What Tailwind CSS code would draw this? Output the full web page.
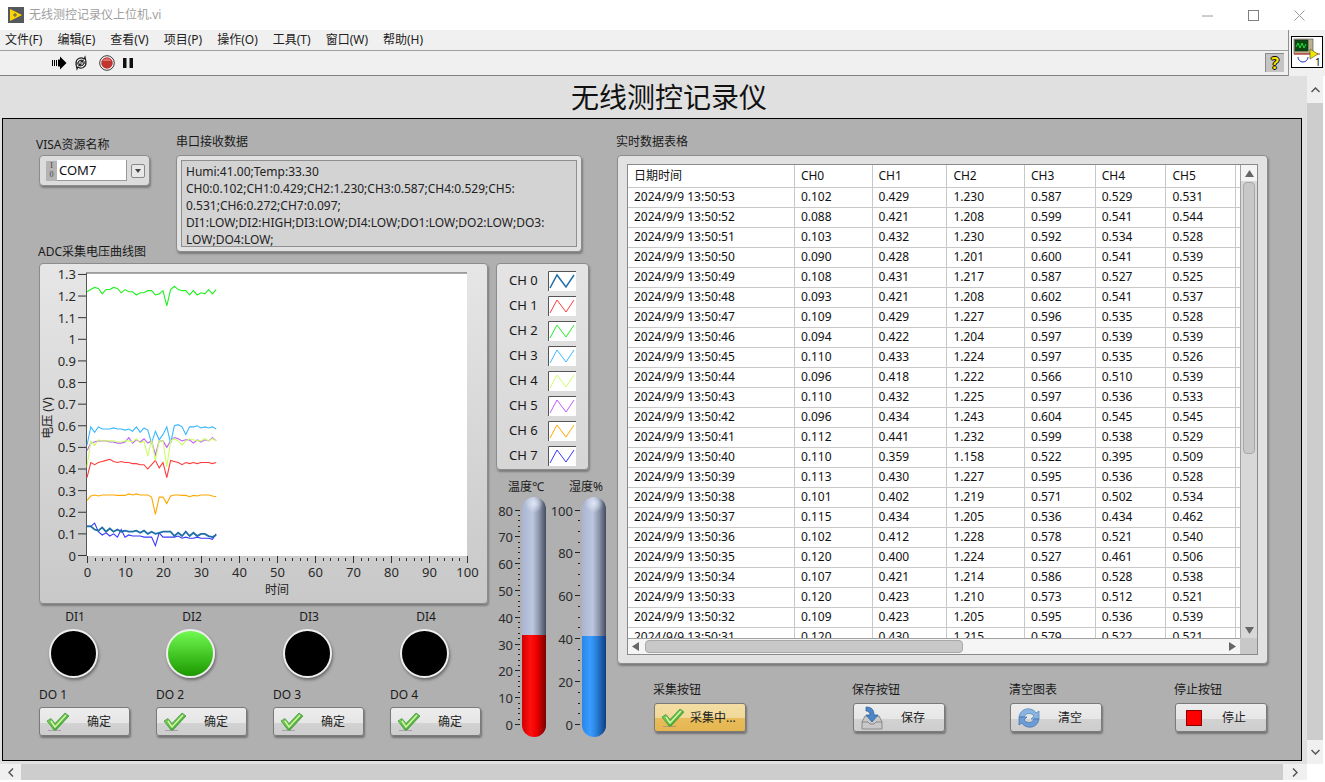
<!DOCTYPE html>
<html lang="zh-CN">
<head>
    <meta charset="UTF-8">
    <title>无线测控记录仪上位机.vi</title>
    <script src="https://cdn.jsdelivr.net/npm/@tailwindcss/browser@4"></script>
</head>
<body class="w-[1325px] h-[782px] overflow-hidden bg-white text-[12px] text-[#1a1a1a] font-['Noto_Sans','Noto_Sans_CJK_SC',sans-serif]">

    <!-- title bar -->
    <div class="h-[30px] flex items-center bg-white">
        <svg class="ml-[8px]" width="16" height="16" viewBox="0 0 16 16"><rect width="16" height="16" fill="#55595e"/><path d="M2 2 L14 8 L2 14 Z" fill="#ffd400"/><path d="M5 8h4M7 6v4" stroke="#55595e" stroke-width="1"/></svg>
        <span class="ml-[5px] text-[#a0a0a0]">无线测控记录仪上位机.vi</span>
        <div class="ml-auto flex items-center pr-[20px] gap-[35px]">
            <svg width="11" height="11" viewBox="0 0 11 11"><path d="M0 6h11" stroke="#9a9a9a"/></svg>
            <svg width="11" height="11" viewBox="0 0 11 11"><rect x=".5" y=".5" width="10" height="10" fill="none" stroke="#808080"/></svg>
            <svg width="11" height="11" viewBox="0 0 11 11"><path d="M.5 .5l10 10M10.5 .5l-10 10" stroke="#9a9a9a"/></svg>
        </div>
    </div>

    <!-- menu + toolbar -->
    <div class="flex h-[46px] bg-[#f0f0f0]">
        <div class="w-[1288px]">
            <div class="h-[21px] border-b border-[#a0a0a0] flex items-center pl-[5px] gap-[15px] text-[#222]">
                <span>文件(F)</span><span>编辑(E)</span><span>查看(V)</span><span>项目(P)</span><span>操作(O)</span><span>工具(T)</span><span>窗口(W)</span><span>帮助(H)</span>
            </div>
            <div class="h-[25px] border-b border-[#808080] flex items-center">
                <svg class="ml-[52px]" width="15" height="14" viewBox="0 0 15 14"><path d="M0 4h1v6H0zM2 4h1v6H2zM4 4h1v6H4zM6 3.5h2V0.5L14.5 7 8 13.500V10.500H6z" fill="#000"/></svg>
                <svg class="ml-[6px]" width="16" height="16" viewBox="0 0 16 16" fill="none" stroke="#222" stroke-width="1.200"><path d="M3 8a5 5 0 0 1 8-4l1-2 1 5h-5l2-1.500a3.500 3.500 0 0 0-5 2.500z" fill="#fff"/><path d="M13 8a5 5 0 0 1-8 4l-1 2-1-5h5l-2 1.500a3.500 3.500 0 0 0 5-2.500z" fill="#fff"/></svg>
                <svg class="ml-[10px]" width="16" height="16" viewBox="0 0 16 16"><circle cx="8" cy="8" r="7.300" fill="#fff" stroke="#333"/><circle cx="8" cy="8" r="5.800" fill="#c0352f"/><path d="M3.500 6a5 5 0 0 1 9 0z" fill="#d9726d"/></svg>
                <svg class="ml-[8px]" width="10" height="12" viewBox="0 0 10 12"><path d="M0 1h3.500v10H0zM6.500 1H10v10H6.500z" fill="#111"/></svg>
                <div class="ml-auto mr-[4px] mb-[1px] w-[19px] h-[19px] bg-[#c4c4c4] border-t border-l border-[#8a8a8a] flex items-center justify-center">
                    <span class="text-[16px] font-bold leading-none text-[#ffe600] [text-shadow:1px_0_0_#000,-1px_0_0_#000,0_1px_0_#000,0_-1px_0_#000]">?</span>
                </div>
            </div>
        </div>
        <div class="flex-1 border-l border-[#909090] pl-[2px] pt-[6px]">
            <svg width="32" height="32" viewBox="0 0 32 32">
                <rect x=".5" y=".5" width="31" height="31" fill="#fff" stroke="#000"/>
                <rect x="3" y="3" width="19" height="15" fill="#b9b48f" stroke="#444" stroke-width=".6"/>
                <rect x="4" y="4" width="13" height="11" fill="#0a4a12" stroke="#222" stroke-width=".6"/>
                <path d="M5 11l2-4 2 5 2-5 2 5 2-4" fill="none" stroke="#28e040"/>
                <path d="M3 18h26" stroke="#d02020"/>
                <path d="M7 21a4 4 0 0 0 10 0" fill="none" stroke="#2030d0"/>
                <path d="M19 13l8 5-8 5z" fill="#f0e800" stroke="#444" stroke-width=".6"/>
                <text x="24" y="30" font-size="10" fill="#000">1</text>
            </svg>
        </div>
    </div>

    <!-- front panel -->
    <div class="flex h-[688px]">
        <div class="w-[1307px] bg-[#e0e0e0]">
            <div class="h-[42px] pl-[31px] flex items-center justify-center text-[28px] text-[#111]">无线测控记录仪</div>
            <div class="ml-[2px] w-[1300px] h-[643px] border border-black bg-[#b0b0b0] flex">

                <!-- left column -->
                <div class="w-[580px] ml-[33px] shrink-0">
                    <div class="flex h-[133px]">
                        <div class="w-[140px] pt-[18px]">
                            <div class="h-[16px] leading-[16px]">VISA资源名称</div>
                            <div class="mt-[2px] ml-[3px] w-[111px] h-[31px] rounded-[4px] border border-[#8c8c8c] bg-[#dcdcdc] shadow-[1px_2px_2px_rgba(0,0,0,0.3)] flex items-center pl-[6px]">
                                <div class="w-[11px] h-[20px] bg-[#b4b4b4] text-[8px] leading-[9px] text-center text-[#444] font-['Liberation_Serif',serif]">I<br>0</div>
                                <div class="w-[70px] h-[21px] bg-white border-r border-b border-[#999] pl-[2px] leading-[20px] text-[13px] text-[#111]">COM7</div>
                                <div class="ml-[4px] w-[14px] h-[14px] rounded-[2px] border border-[#888] bg-[#e8e8e8] flex items-center justify-center">
                                    <svg width="6" height="4" viewBox="0 0 6 4"><path d="M0 0h6L3 4z" fill="#444"/></svg>
                                </div>
                            </div>
                        </div>
                        <div class="pt-[15px]">
                            <div class="h-[16px] leading-[16px] mb-[5px]">串口接收数据</div>
                            <div class="w-[406px] h-[97px] rounded-[4px] border border-[#8c8c8c] bg-[#e2e2e2] shadow-[1px_2px_2px_rgba(0,0,0,0.3)] p-[4px]">
                                <div class="h-[87px] bg-[#d3d3d3] border border-[#8f8f8f] pl-[4px] pt-[2px] leading-[17px] text-[#222] whitespace-nowrap">
                                    Humi:41.00;Temp:33.30<br>
                                    CH0:0.102;CH1:0.429;CH2:1.230;CH3:0.587;CH4:0.529;CH5:<br>
                                    0.531;CH6:0.272;CH7:0.097;<br>
                                    DI1:LOW;DI2:HIGH;DI3:LOW;DI4:LOW;DO1:LOW;DO2:LOW;DO3:<br>
                                    LOW;DO4:LOW;
                                </div>
                            </div>
                        </div>
                    </div>

                    <div class="flex ml-[2px]">
                        <div class="w-[458px] shrink-0">
                            <div class="-mt-[8px] h-[16px] leading-[16px] mb-[3px]">ADC采集电压曲线图</div>
                            <div class="ml-px w-[449px] h-[341px] rounded-[4px] border border-[#8c8c8c] bg-[linear-gradient(#e6e6e6,#c8c8c8)] shadow-[1px_2px_2px_rgba(0,0,0,0.3)]">
                                <svg id="chart" class="-m-px" width="449" height="341" font-size="13"></svg>
                            </div>

                            <div class="mt-[6px] flex gap-[46px]">
                                <div class="w-[71px] flex flex-col items-center"><div class="h-[14px] leading-[14px] pl-[3px]">DI1</div><div class="mt-[5px] w-[49px] h-[49px] rounded-full bg-black border-2 border-[#eee] shadow-[1px_2px_3px_rgba(0,0,0,0.4)]"></div></div>
                                <div class="w-[71px] flex flex-col items-center"><div class="h-[14px] leading-[14px] pl-[3px]">DI2</div><div class="mt-[5px] w-[49px] h-[49px] rounded-full bg-[linear-gradient(#70fa50,#1c9800)] border-2 border-[#eee] shadow-[1px_2px_3px_rgba(0,0,0,0.4)]"></div></div>
                                <div class="w-[71px] flex flex-col items-center"><div class="h-[14px] leading-[14px] pl-[3px]">DI3</div><div class="mt-[5px] w-[49px] h-[49px] rounded-full bg-black border-2 border-[#eee] shadow-[1px_2px_3px_rgba(0,0,0,0.4)]"></div></div>
                                <div class="w-[71px] flex flex-col items-center"><div class="h-[14px] leading-[14px] pl-[3px]">DI4</div><div class="mt-[5px] w-[49px] h-[49px] rounded-full bg-black border-2 border-[#eee] shadow-[1px_2px_3px_rgba(0,0,0,0.4)]"></div></div>
                            </div>

                            <div class="mt-[10px] ml-px flex gap-[26px]">
                                <div class="w-[91px]"><div class="h-[14px] leading-[14px]">DO 1</div><div class="do-btn mt-[5px] w-[91px] h-[29px] rounded-[3px] border border-[#7a7a7a] bg-[linear-gradient(#ededed_0%,#e6e6e6_55%,#d2d2d2_56%,#cdcdcd_100%)] shadow-[1px_2px_2px_rgba(0,0,0,0.35)] flex items-center pl-[6px]"></div></div>
                                <div class="w-[91px]"><div class="h-[14px] leading-[14px]">DO 2</div><div class="do-btn mt-[5px] w-[91px] h-[29px] rounded-[3px] border border-[#7a7a7a] bg-[linear-gradient(#ededed_0%,#e6e6e6_55%,#d2d2d2_56%,#cdcdcd_100%)] shadow-[1px_2px_2px_rgba(0,0,0,0.35)] flex items-center pl-[6px]"></div></div>
                                <div class="w-[91px]"><div class="h-[14px] leading-[14px]">DO 3</div><div class="do-btn mt-[5px] w-[91px] h-[29px] rounded-[3px] border border-[#7a7a7a] bg-[linear-gradient(#ededed_0%,#e6e6e6_55%,#d2d2d2_56%,#cdcdcd_100%)] shadow-[1px_2px_2px_rgba(0,0,0,0.35)] flex items-center pl-[6px]"></div></div>
                                <div class="w-[91px]"><div class="h-[14px] leading-[14px]">DO 4</div><div class="do-btn mt-[5px] w-[91px] h-[29px] rounded-[3px] border border-[#7a7a7a] bg-[linear-gradient(#ededed_0%,#e6e6e6_55%,#d2d2d2_56%,#cdcdcd_100%)] shadow-[1px_2px_2px_rgba(0,0,0,0.35)] flex items-center pl-[6px]"></div></div>
                            </div>
                        </div>

                        <div class="w-[120px] shrink-0">
                            <div id="legend" class="mt-[11px] w-[93px] h-[207px] rounded-[4px] border border-[#8c8c8c] bg-[linear-gradient(#e4e4e4,#d6d6d6)] shadow-[1px_2px_2px_rgba(0,0,0,0.3)] pt-[4px]"></div>
                            <div class="mt-[10px] flex h-[14px] leading-[14px] text-center">
                                <div class="w-[60px]">温度℃</div>
                                <div class="w-[60px]">湿度%</div>
                            </div>
                            <div class="mt-[3px] flex h-[240px]">
                                <svg id="scaleT" width="26" height="240" font-size="13"></svg>
                                <div class="relative w-[24px] h-[240px] rounded-t-[12px] rounded-b-[12px] overflow-hidden bg-[linear-gradient(90deg,#aab5d2_0%,#bcc6df_45%,#8e97ad_70%,#454c60_100%)]">
                                    <div class="absolute left-0 top-0 w-full h-[16px] bg-[radial-gradient(circle_at_50%_40%,#dfe6f5,transparent_60%)]"></div>
                                    <div class="absolute left-0 bottom-0 w-full h-[102px] bg-[linear-gradient(90deg,#d00000_0%,#ff1010_35%,#f00000_60%,#7a0000_100%)]"></div>
                                </div>
                                <svg id="scaleH" width="36" height="240" font-size="13"></svg>
                                <div class="relative w-[24px] h-[240px] rounded-t-[12px] rounded-b-[12px] overflow-hidden bg-[linear-gradient(90deg,#aab5d2_0%,#bcc6df_45%,#8e97ad_70%,#454c60_100%)]">
                                    <div class="absolute left-0 top-0 w-full h-[16px] bg-[radial-gradient(circle_at_50%_40%,#dfe6f5,transparent_60%)]"></div>
                                    <div class="absolute left-0 bottom-0 w-full h-[101px] bg-[linear-gradient(90deg,#2a86e8_0%,#3a9cff_35%,#2a80dc_60%,#0c3f80_100%)]"></div>
                                </div>
                            </div>
                        </div>
                    </div>
                </div>

                <!-- right column -->
                <div class="pt-[15px]">
                    <div class="h-[16px] leading-[16px] mb-[5px]">实时数据表格</div>
                    <div class="ml-px w-[651px] h-[509px] rounded-[4px] border border-[#8c8c8c] bg-[#e2e2e2] shadow-[1px_2px_2px_rgba(0,0,0,0.3)] pl-[9px] pt-[8px]">
                        <div class="w-[631px] h-[491px] border border-[#8a8a8a] bg-white">
                            <div class="flex h-[473px]">
                                <div class="w-[612px] h-[473px] overflow-hidden">
                                    <table class="table-fixed border-collapse w-[892px] text-[#111]">
                                        <colgroup>
                                            <col class="w-[120px]"><col class="w-[56px]"><col class="w-[54px]"><col class="w-[56px]"><col class="w-[51px]"><col class="w-[51px]"><col class="w-[50px]"><col class="w-[52px]"><col class="w-[51px]"><col class="w-[51px]"><col class="w-[51px]">
                                        </colgroup>
                                        <thead id="thead"></thead>
                                        <tbody id="tbody"></tbody>
                                    </table>
                                </div>
                                <div class="w-[17px] h-[473px] bg-[#d8d8d8] border-l border-[#a0a0a0] flex flex-col items-center">
                                    <div class="w-full h-[16px] bg-[#f4f4f4] flex items-center justify-center"><svg width="9" height="7" viewBox="0 0 9 7"><path d="M4.500 0L9 7H0z" fill="#666"/></svg></div>
                                    <div class="mt-[1px] w-[12px] h-[272px] rounded-[4px] border border-[#a8a8a8] bg-[#c8c8c8]"></div>
                                    <div class="mt-auto mb-[4px]"><svg width="9" height="7" viewBox="0 0 9 7"><path d="M0 0h9L4.500 7z" fill="#666"/></svg></div>
                                </div>
                            </div>
                            <div class="flex h-[16px]">
                                <div class="w-[612px] bg-[#f5f5f5] border-t border-[#a0a0a0] flex items-center pl-[4px]">
                                    <svg width="7" height="9" viewBox="0 0 7 9"><path d="M0 4.500L7 0V9z" fill="#666"/></svg>
                                    <div class="ml-[6px] w-[318px] h-[13px] rounded-[4px] border border-[#a8a8a8] bg-[#c8c8c8]"></div>
                                    <svg class="ml-auto mr-[4px]" width="7" height="9" viewBox="0 0 7 9"><path d="M7 4.500L0 0V9z" fill="#666"/></svg>
                                </div>
                                <div class="w-[17px] bg-[#c8c8c8]"></div>
                            </div>
                        </div>
                    </div>

                    <div class="mt-[19px] ml-[37px] flex">
                        <div class="w-[199px]">
                            <div class="h-[14px] leading-[14px]">采集按钮</div>
                            <div class="mt-[6px] ml-px w-[92px] h-[29px] rounded-[3px] border border-[#7a7a7a] bg-[linear-gradient(#f3dda4_0%,#f0d998_50%,#e8bd5c_52%,#e6b650_100%)] shadow-[1px_2px_2px_rgba(0,0,0,0.35)] flex items-center pl-[6px]">
                                <svg width="24" height="20" viewBox="0 0 24 20"><use href="#check"/></svg>
                                <span class="ml-[5px] text-[#222]">采集中...</span>
                            </div>
                        </div>
                        <div class="w-[157px]">
                            <div class="h-[14px] leading-[14px]">保存按钮</div>
                            <div class="mt-[6px] ml-px w-[92px] h-[29px] rounded-[3px] border border-[#7a7a7a] bg-[linear-gradient(#ededed_0%,#e6e6e6_55%,#d2d2d2_56%,#cdcdcd_100%)] shadow-[1px_2px_2px_rgba(0,0,0,0.35)] flex items-center pl-[6px]">
                                <svg width="24" height="24" viewBox="0 0 24 24">
                                    <path d="M5 10h14l3 6v7H2v-7z" fill="#c8c8c8" stroke="#8a8a8a"/>
                                    <path d="M2 16h6l2 2h4l2-2h6" fill="none" stroke="#8a8a8a"/>
                                    <path d="M6 1c6 0 8 3 8 8h4l-6 7-6-7h4c0-3-2-4-4-4z" fill="#4a86c8" stroke="#2a5a98" stroke-width=".7"/>
                                </svg>
                                <span class="ml-[17px] text-[#222]">保存</span>
                            </div>
                        </div>
                        <div class="w-[165px]">
                            <div class="h-[14px] leading-[14px]">清空图表</div>
                            <div class="mt-[6px] ml-px w-[92px] h-[29px] rounded-[3px] border border-[#7a7a7a] bg-[linear-gradient(#ededed_0%,#e6e6e6_55%,#d2d2d2_56%,#cdcdcd_100%)] shadow-[1px_2px_2px_rgba(0,0,0,0.35)] flex items-center pl-[6px]">
                                <svg width="24" height="24" viewBox="0 0 24 24">
                                    <path d="M2 11C3 5 8 2 13 3c3 .6 5 2 6 4l3-2v8h-8l3-3c-2-3-8-4-10 1z" fill="#8ab4e0" stroke="#5a8ac0" stroke-width=".8"/>
                                    <path d="M22 13c-1 6-6 9-11 8-3-.6-5-2-6-4l-3 2v-8h8l-3 3c2 3 8 4 10-1z" fill="#6c9cd4" stroke="#4a7ab0" stroke-width=".8"/>
                                </svg>
                                <span class="ml-[17px] text-[#222]">清空</span>
                            </div>
                        </div>
                        <div class="w-[92px]">
                            <div class="h-[14px] leading-[14px]">停止按钮</div>
                            <div class="mt-[6px] ml-px w-[92px] h-[29px] rounded-[3px] border border-[#7a7a7a] bg-[linear-gradient(#ededed_0%,#e6e6e6_55%,#d2d2d2_56%,#cdcdcd_100%)] shadow-[1px_2px_2px_rgba(0,0,0,0.35)] flex items-center pl-[10px]">
                                <div class="w-[16px] h-[16px] bg-[#f00] border border-[#800]"></div>
                                <span class="ml-[20px] text-[#222]">停止</span>
                            </div>
                        </div>
                    </div>
                </div>
            </div>
        </div>

        <!-- page scrollbar -->
        <div class="w-[16px] flex flex-col bg-[#cdcdcd]">
            <div class="h-[27px] bg-[#f0f0f0] flex items-center justify-center"><svg width="9" height="6" viewBox="0 0 9 6"><path d="M.5 5l4-4 4 4" fill="none" stroke="#555" stroke-width="1.500"/></svg></div>
            <div class="flex-1"></div>
            <div class="h-[24px] bg-[#f0f0f0] flex items-center justify-center"><svg width="9" height="6" viewBox="0 0 9 6"><path d="M.5 1l4 4 4-4" fill="none" stroke="#555" stroke-width="1.500"/></svg></div>
        </div>
    </div>

    <div class="h-[16px] w-[1307px] bg-[#cdcdcd] flex">
        <div class="w-[21px] bg-[#f0f0f0] flex items-center justify-center"><svg width="6" height="9" viewBox="0 0 6 9"><path d="M5 .5l-4 4 4 4" fill="none" stroke="#555" stroke-width="1.500"/></svg></div>
        <div class="flex-1"></div>
        <div class="w-[24px] bg-[#f0f0f0] flex items-center justify-center"><svg width="6" height="9" viewBox="0 0 6 9"><path d="M1 .5l4 4-4 4" fill="none" stroke="#555" stroke-width="1.500"/></svg></div>
    </div>

    <svg width="0" height="0" class="absolute">
        <defs>
            <linearGradient id="chk" x1="0" y1="0" x2="1" y2="1"><stop offset="0" stop-color="#8fdc6a"/><stop offset="1" stop-color="#2f9e28"/></linearGradient>
            <g id="check">
                <path d="M2 18.500h13" stroke="#888" stroke-width="1" opacity=".6"/>
                <path d="M1 9l4-2.500 4 5L19 1l4 3L10 18H8z" fill="url(#chk)" stroke="#3d8f34" stroke-width=".7"/>
                <path d="M5 9l4 6L20 3" fill="none" stroke="#d8f5a8" stroke-width="1.500"/>
            </g>
        </defs>
    </svg>

    <script>
        // table
        const rows = [
            ['53','0.102','0.429','1.230','0.587','0.529','0.531','0.272','0.097','LOW','HIGH'],
            ['52','0.088','0.421','1.208','0.599','0.541','0.544','0.277','0.075','LOW','HIGH'],
            ['51','0.103','0.432','1.230','0.592','0.534','0.528','0.275','0.080','LOW','HIGH'],
            ['50','0.090','0.428','1.201','0.600','0.541','0.539','0.280','0.077','LOW','HIGH'],
            ['49','0.108','0.431','1.217','0.587','0.527','0.525','0.276','0.083','LOW','HIGH'],
            ['48','0.093','0.421','1.208','0.602','0.541','0.537','0.279','0.080','LOW','HIGH'],
            ['47','0.109','0.429','1.227','0.596','0.535','0.528','0.274','0.082','LOW','HIGH'],
            ['46','0.094','0.422','1.204','0.597','0.539','0.539','0.278','0.079','LOW','LOW'],
            ['45','0.110','0.433','1.224','0.597','0.535','0.526','0.275','0.081','LOW','LOW'],
            ['44','0.096','0.418','1.222','0.566','0.510','0.539','0.279','0.081','LOW','LOW'],
            ['43','0.110','0.432','1.225','0.597','0.536','0.533','0.276','0.101','LOW','LOW'],
            ['42','0.096','0.434','1.243','0.604','0.545','0.545','0.280','0.084','LOW','LOW'],
            ['41','0.112','0.441','1.232','0.599','0.538','0.529','0.278','0.082','LOW','LOW'],
            ['40','0.110','0.359','1.158','0.522','0.395','0.509','0.241','0.082','LOW','LOW'],
            ['39','0.113','0.430','1.227','0.595','0.536','0.528','0.275','0.085','LOW','LOW'],
            ['38','0.101','0.402','1.219','0.571','0.502','0.534','0.275','0.106','LOW','LOW'],
            ['37','0.115','0.434','1.205','0.536','0.434','0.462','0.189','0.047','LOW','LOW'],
            ['36','0.102','0.412','1.228','0.578','0.521','0.540','0.278','0.102','LOW','LOW'],
            ['35','0.120','0.400','1.224','0.527','0.461','0.506','0.275','0.085','LOW','LOW'],
            ['34','0.107','0.421','1.214','0.586','0.528','0.538','0.280','0.089','LOW','LOW'],
            ['33','0.120','0.423','1.210','0.573','0.512','0.521','0.278','0.088','LOW','LOW'],
            ['32','0.109','0.423','1.205','0.595','0.536','0.539','0.286','0.093','LOW','LOW'],
            ['31','0.120','0.430','1.215','0.579','0.522','0.521','0.278','0.089','LOW','LOW']
        ];
        const head = ['日期时间','CH0','CH1','CH2','CH3','CH4','CH5','CH6','CH7','DI1','DI2'];
        const cell = 'h-[20px] pl-[6px] p-0 border-r border-b border-[#c8c8c8] whitespace-nowrap overflow-hidden text-left font-normal';
        document.getElementById('thead').innerHTML = '<tr class="h-[22px]">' + head.map(h => `<th class="${cell}">${h}</th>`).join('') + '</tr>';
        document.getElementById('tbody').innerHTML = rows.map(r =>
            '<tr class="h-[20px]">' + r.map((v, i) => `<td class="${cell}">${i === 0 ? '2024/9/9 13:50:' + v : v}</td>`).join('') + '</tr>'
        ).join('');

        // DO buttons
        document.querySelectorAll('.do-btn').forEach(b => {
            b.innerHTML = '<svg width="24" height="20" viewBox="0 0 24 20"><use href="#check"/></svg><span class="ml-[17px] text-[#222]">确定</span>';
        });

        // plot
        const colors = ['#1f6fa8','#ff3b3b','#22f022','#38b8ff','#ccff66','#c05cff','#ffa800','#3838ff'];
        const series = [
            [.135,.135,.12,.115,.13,.11,.125,.11,.12,.11,.115,.11,.11,.115,.105,.115,.1,.11,.1,.105,.11,.11,.11,.09,.105,.09,.11,.09,.105,.09,.1,.1,.09,.085,.095],
            [.36,.43,.42,.43,.435,.44,.445,.435,.43,.435,.43,.43,.425,.425,.42,.42,.40,.42,.44,.405,.43,.36,.44,.435,.43,.42,.43,.425,.43,.425,.43,.43,.43,.425,.43],
            [1.22,1.23,1.24,1.235,1.21,1.23,1.23,1.24,1.235,1.215,1.23,1.22,1.22,1.205,1.215,1.215,1.225,1.225,1.205,1.21,1.225,1.155,1.23,1.245,1.23,1.225,1.225,1.205,1.225,1.205,1.215,1.21,1.23,1.21,1.23],
            [.51,.595,.57,.595,.585,.585,.585,.59,.585,.585,.58,.585,.575,.595,.57,.59,.58,.52,.575,.535,.56,.595,.52,.6,.605,.595,.56,.595,.595,.6,.59,.595,.59,.595,.585],
            [.41,.53,.51,.535,.53,.53,.53,.53,.525,.525,.53,.53,.525,.54,.52,.53,.46,.535,.44,.53,.53,.41,.53,.54,.53,.51,.53,.54,.535,.53,.53,.54,.53,.54,.53],
            [.485,.52,.525,.53,.53,.53,.525,.525,.52,.52,.525,.545,.52,.535,.525,.54,.52,.53,.465,.53,.53,.5,.53,.545,.54,.53,.535,.535,.52,.535,.525,.535,.53,.545,.53],
            [.255,.275,.28,.275,.28,.28,.28,.28,.278,.278,.278,.285,.28,.285,.28,.28,.28,.27,.19,.27,.27,.24,.275,.28,.28,.278,.278,.272,.278,.275,.28,.28,.28,.275,.272],
            [.135,.135,.15,.11,.095,.105,.09,.1,.085,.12,.085,.095,.09,.09,.09,.085,.085,.085,.045,.105,.085,.085,.085,.085,.09,.08,.085,.08,.08,.085,.08,.08,.08,.075,.1]
        ];
        const X = v => 48 + 3.8 * v;
        const Y = v => 292.5 - 216.2 * v;
        let s = '<rect x="47" y="10" width="381" height="283" fill="#fff"/><path d="M47 10H428M47.500 10V293" stroke="#555" fill="none"/>';
        for (let i = 0; i <= 13; i++) {
            const v = i / 10, y = Y(v);
            s += `<path d="M39 ${y}h8" stroke="#333"/><text x="37" y="${y + 5}" text-anchor="end" fill="#2a2a2a">${i === 10 ? '1' : i === 0 ? '0' : v.toFixed(1)}</text>`;
        }
        for (let i = 0; i <= 50; i++) {
            const x = Math.round(X(i * 2)) + .5;
            s += `<path d="M${x} ${i % 5 ? 295 : 293}V${i % 5 ? 298 : 300}" stroke="#333"/>`;
            if (i % 5 === 0) s += `<text x="${x}" y="314" text-anchor="middle" fill="#2a2a2a">${i * 2}</text>`;
        }
        s += '<text x="238" y="331" text-anchor="middle" font-size="12" fill="#222">时间</text>';
        s += '<text transform="translate(13 155) rotate(-90)" text-anchor="middle" font-size="12" fill="#222">电压 (V)</text>';
        [7, 6, 1, 2, 3, 5, 4, 0].forEach(n => {
            const pts = series[n].map((v, i) => X(i) + ',' + Y(v)).join(' ');
            s += `<polyline points="${pts}" fill="none" stroke="${colors[n]}" stroke-width="${n === 0 ? 1.8 : 1.1}"/>`;
        });
        document.getElementById('chart').innerHTML = s;

        // legend
        document.getElementById('legend').innerHTML = colors.map((c, i) => `
            <div class="flex items-center h-[25px] pl-[12px] text-[13px]">
                <span class="w-[39px]">CH ${i}</span>
                <svg width="28" height="20" viewBox="0 0 28 20"><rect width="28" height="20" fill="#fff"/><path d="M.5 20V.5H28" fill="none" stroke="#555"/><polyline points="2,17 9,4 18,16 26,4" fill="none" stroke="${c}" stroke-width="${i === 0 ? 1.5 : 1}"/></svg>
            </div>`).join('');

        // thermometer scales
        const scale = (id, max, step, minor, right) => {
            let t = '';
            const perUnit = 214.5 / max;
            for (let v = 0; v <= max; v += step / (minor + 1)) {
                const y = Math.round(227 - v * perUnit) + .5;
                const major = Math.abs(v / step - Math.round(v / step)) < .001;
                t += `<path d="M${right - (major ? 6 : 3)} ${y}H${right - 1}" stroke="#222"/>`;
                if (major) t += `<text x="${right - 8}" y="${y + 5}" text-anchor="end" fill="#2a2a2a">${Math.round(v)}</text>`;
            }
            document.getElementById(id).innerHTML = t;
        };
        scale('scaleT', 80, 10, 4, 25);
        scale('scaleH', 100, 20, 3, 35);
    </script>
</body>
</html>
